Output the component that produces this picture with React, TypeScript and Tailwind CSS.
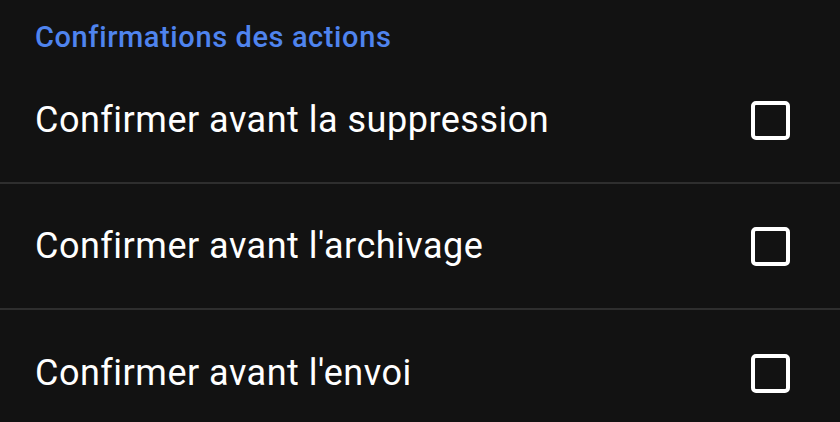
import React from "react";

const rows = [
  "Confirmer avant la suppression",
  "Confirmer avant l'archivage",
  "Confirmer avant l'envoi",
];

function Checkbox() {
  return (
    <div className="w-[39px] h-[39px] rounded-[5px] border-[4px] border-white shrink-0" />
  );
}

export default function App() {
  return (
    <div
      className="w-[840px] h-[422px] overflow-hidden bg-[#121212] text-white"
      style={{ fontFamily: "Roboto, 'Liberation Sans', sans-serif" }}
    >
      <div className="h-[58px] pl-[35px] pt-[23px]">
        <span className="block text-[#4f84ee] text-[29px] font-medium leading-[29px] tracking-[0.6px]">
          Confirmations des actions
        </span>
      </div>
      {rows.map((label, i) => (
        <div
          key={label}
          className={`h-[126px] flex items-center justify-between pl-[35px] pr-[50px] ${
            i < rows.length - 1 ? "border-b-2 border-[#2e2e2e]" : ""
          }`}
        >
          <span className="text-[36px] leading-none tracking-[0.5px]">{label}</span>
          <Checkbox />
        </div>
      ))}
    </div>
  );
}
